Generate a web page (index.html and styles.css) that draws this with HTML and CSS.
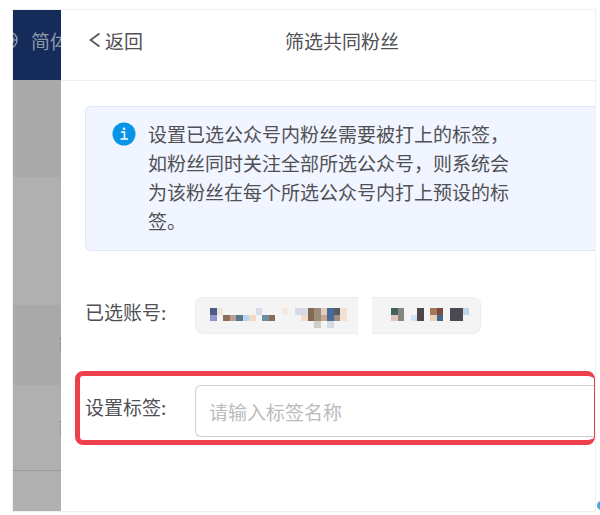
FILE: index.html
```
<!DOCTYPE html>
<html lang="zh-CN">
<head>
    <meta charset="UTF-8">
    <meta name="viewport" content="width=device-width, initial-scale=1.0">
    <title>筛选共同粉丝</title>
    <link rel="stylesheet" href="styles.css">
</head>
<body>
    <div class="window">
        <aside class="backdrop">
            <div class="navbar">
                <svg class="globe" viewBox="0 0 20 20" fill="none" stroke="currentColor" stroke-width="1.5">
                    <circle cx="10" cy="10" r="8"/>
                    <ellipse cx="10" cy="10" rx="4" ry="8"/>
                    <path d="M2 10h16"/>
                </svg>
                <span>简体</span>
            </div>
            <div class="band band-top"></div>
            <div class="band band-light"></div>
            <div class="band band-dark"><i class="speck"></i></div>
            <div class="band band-row"><i class="speck"></i></div>
            <div class="band band-last"></div>
        </aside>

        <main class="drawer">
            <header class="drawer-header">
                <button class="back" type="button">
                    <svg width="12" height="16" viewBox="0 0 12 16" fill="none" stroke="currentColor" stroke-width="1.6">
                        <path d="M10.500 1.500L1.500 8l9 6.500"/>
                    </svg>
                    <span>返回</span>
                </button>
                <h1>筛选共同粉丝</h1>
            </header>

            <div class="notice">
                <svg class="info-icon" width="24" height="24" viewBox="0 0 24 24">
                    <circle cx="12" cy="12" r="11.500" fill="#0795e8"/>
                    <path d="M9 10h3.500v7M8.500 17h7.500" fill="none" stroke="#fff" stroke-width="1.600"/>
                    <circle cx="12" cy="6.700" r="1.300" fill="#fff"/>
                </svg>
                <p>设置已选公众号内粉丝需要被打上的标签，如粉丝同时关注全部所选公众号，则系统会为该粉丝在每个所选公众号内打上预设的标签。</p>
            </div>

            <div class="form-row accounts">
                <span class="label">已选账号:</span>
                <div class="tag tag-first">
                    <svg width="143" height="20" viewBox="0 0 22 3" preserveAspectRatio="none" shape-rendering="crispEdges">
                        <path fill="#4a5d86" d="M0 0h1v1h-1z"/>
                        <path fill="#8e97cc" d="M0 1h1v1h-1z"/>
                        <path fill="#f2e4d8" d="M1 0h1v1h-1z"/>
                        <path fill="#8a6f5d" d="M2 1h1v1h-1z"/>
                        <path fill="#bb9e92" d="M3 1h1v1h-1z"/>
                        <path fill="#5b7585" d="M4 1h1v1h-1z"/>
                        <path fill="#b5d8f0" d="M5 1h1v1h-1z"/>
                        <path fill="#f0dcc6" d="M6 1h1v1h-1z"/>
                        <path fill="#d8dde8" d="M7 0h1v1h-1z"/>
                        <path fill="#6c8ea5" d="M8 1h1v1h-1z"/>
                        <path fill="#8b6b52" d="M9 1h1v1h-1z"/>
                        <path fill="#f4eae2" d="M11 0h1v1h-1z"/>
                        <path fill="#d5dae4" d="M13 0h2v1h-2zM18 2h1v1h-1z"/>
                        <path fill="#f0ddd0" d="M14 1h1v1h-1z"/>
                        <path fill="#86674f" d="M15 0h1v2h-1z"/>
                        <path fill="#9b8d7c" d="M16 0h1v2h-1z"/>
                        <path fill="#d3cdc7" d="M16 2h1v1h-1z"/>
                        <path fill="#e2cbb8" d="M17 0h1v1h-1z"/>
                        <path fill="#c5a98d" d="M17 1h1v1h-1z"/>
                        <path fill="#486a99" d="M18 0h1v2h-1z"/>
                        <path fill="#555c62" d="M19 0h1v1h-1z"/>
                        <path fill="#a09080" d="M19 1h1v1h-1z"/>
                        <path fill="#f3e2d3" d="M20 0h1v2h-1z"/>
                    </svg>
                </div>
                <div class="tag tag-second">
                    <svg width="78" height="13" viewBox="0 0 12 2" preserveAspectRatio="none" shape-rendering="crispEdges">
                        <path fill="#44615e" d="M0 0h1v1h-1z"/>
                        <path fill="#e0c5b8" d="M0 1h1v1h-1z"/>
                        <path fill="#85877e" d="M1 0h1v2h-1z"/>
                        <path fill="#cfe4f5" d="M3 1h1v1h-1z"/>
                        <path fill="#50464a" d="M4 0h1v2h-1z"/>
                        <path fill="#a5765a" d="M6 0h1v1h-1z"/>
                        <path fill="#ecd0b8" d="M6 1h1v1h-1z"/>
                        <path fill="#7c4a3f" d="M7 0h1v1h-1z"/>
                        <path fill="#3f6a8c" d="M7 1h1v1h-1z"/>
                        <path fill="#4b4a52" d="M9 0h2v2h-2z"/>
                        <path fill="#b9d8f0" d="M11 0h1v1h-1z"/>
                    </svg>
                </div>
            </div>

            <div class="form-row highlight">
                <label class="label" for="tagName">设置标签:</label>
                <input type="text" id="tagName" placeholder="请输入标签名称">
            </div>
        </main>
    </div>
    <span class="float-dot"></span>
</body>
</html>
```
FILE: styles.css
```
* {
    margin: 0;
    padding: 0;
    box-sizing: border-box;
}
body {
    background: #fff;
    color: #505055;
    font-family: "Noto Sans CJK SC", sans-serif;
    font-size: 19px;
    line-height: 29px;
    padding: 9px 4px 3px 12px;
}
.window {
    display: flex;
    min-height: calc(100vh - 12px);
    border: 1px solid #f0f0f0;
    overflow: hidden;
}

/* dimmed page behind the drawer */
.backdrop {
    display: flex;
    flex-direction: column;
    flex: 0 0 48px;
    overflow: hidden;
    background: #b0b0b0;
}
.navbar {
    display: flex;
    align-items: center;
    gap: 12px;
    height: 70px;
    padding-bottom: 10px;
    background: #152b59;
    color: #8f97ab;
    white-space: nowrap;
}
.globe {
    flex: 0 0 20px;
    height: 20px;
    margin-left: -14px;
}
.band {
    display: flex;
    justify-content: flex-end;
    align-items: center;
}
.band-top {
    height: 97px;
    background: #a9a9a9;
}
.band-light {
    height: 128px;
}
.band-dark {
    height: 80px;
    background: #a9a9a9;
}
.band-row {
    height: 86px;
    border-bottom: 1px solid #999;
}
.band-last {
    flex: 1;
}
.speck {
    height: 14px;
    border-right: 1px dotted #888;
}

.drawer {
    flex: 1;
    min-width: 0;
    background: #fff;
}
.drawer-header {
    display: grid;
    grid-template-columns: 1fr auto 1fr;
    align-items: center;
    height: 71px;
    padding: 0 0 10px 28px;
    border-bottom: 1px solid #f0f0f0;
}
.back {
    display: flex;
    align-items: center;
    justify-self: start;
    gap: 4px;
    border: none;
    background: none;
    color: inherit;
    font: inherit;
    cursor: pointer;
}
h1 {
    font-size: 19px;
    font-weight: normal;
}

.notice {
    display: flex;
    gap: 12px;
    margin: 25px 0 0 24px;
    padding: 12px 26px 15px;
    border: 1px solid #dce8fa;
    border-right: none;
    border-radius: 6px 0 0 6px;
    background: #f0f5ff;
}
.notice p {
    max-width: 372px;
}
.info-icon {
    flex: none;
    margin-top: 3px;
}

.form-row {
    display: flex;
}
.label {
    flex: 0 0 110px;
}
.accounts {
    gap: 14px;
    margin: 46px 0 0 24px;
}
.accounts .label {
    flex-basis: 96px;
}
.tag {
    height: 37px;
    padding: 10px 5px 0 14px;
    border: 1px solid #ececec;
    border-right: none;
    border-radius: 8px 0 0 8px;
    background: #f4f4f4;
}
.tag svg {
    display: block;
}
.tag-second {
    padding: 10px 11px 0 19px;
    border: 1px solid #ececec;
    border-left: none;
    border-radius: 0 8px 8px 0;
}

.highlight {
    margin: 37px 0 0 14px;
    padding: 9px 0 3px 5px;
    border: 5px solid #ee3f4d;
    border-right-width: 1px;
    border-radius: 8px;
}
.highlight .label {
    padding-top: 7px;
}
input {
    flex: 1;
    min-width: 0;
    height: 52px;
    padding: 0 13px;
    border: 1px solid #d0d0d0;
    border-right: none;
    border-radius: 6px 0 0 6px;
    background: #fff;
    color: inherit;
    font: inherit;
    outline: none;
}
input::placeholder {
    color: #bbb;
}

/* edge of the floating help button */
.float-dot {
    position: fixed;
    right: -6px;
    bottom: 5px;
    width: 9px;
    height: 9px;
    border-radius: 50%;
    background: #4aa8e8;
}
```
